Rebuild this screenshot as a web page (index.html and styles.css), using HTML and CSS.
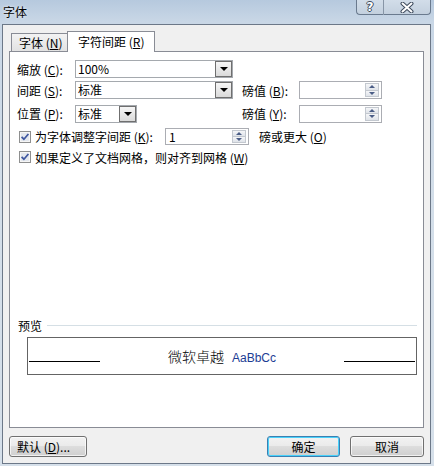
FILE: index.html
```html
<!DOCTYPE html>
<html lang="zh-CN">
<head>
<meta charset="utf-8">
<title>字体</title>
<link rel="stylesheet" href="styles.css">
</head>
<body>
<div class="window">
  <div class="titlebar">
    <span class="title">字体</span>
    <div class="caption">
      <div class="cap-btn help"><span class="qmark">?</span></div>
      <div class="cap-btn close">
        <svg width="14" height="11" viewBox="0 0 14 11">
          <path d="M2.5 1.5 L11.5 9.5 M11.5 1.5 L2.5 9.5" stroke="#3d4a5c" stroke-width="4" stroke-linecap="round" fill="none"/>
          <path d="M2.5 1.5 L11.5 9.5 M11.5 1.5 L2.5 9.5" stroke="#ffffff" stroke-width="2" stroke-linecap="round" fill="none"/>
        </svg>
      </div>
    </div>
  </div>
  <div class="client">
    <div class="tabs">
      <div class="tab inactive">字体 (<u>N</u>)</div>
      <div class="tab active">字符间距 (<u>R</u>)</div>
    </div>
    <div class="panel">
      <div class="row r1">
        <span class="lbl">缩放 (<u>C</u>):</span>
        <div class="combo wide"><span class="val">100%</span><span class="drop"></span></div>
      </div>
      <div class="row r2">
        <span class="lbl">间距 (<u>S</u>):</span>
        <div class="combo wide"><span class="val">标准</span><span class="drop"></span></div>
        <span class="lbl2">磅值 (<u>B</u>):</span>
        <div class="spin wide2"><span class="val"></span><span class="arrows"><span class="up"></span><span class="down"></span></span></div>
      </div>
      <div class="row r3">
        <span class="lbl">位置 (<u>P</u>):</span>
        <div class="combo narrow"><span class="val">标准</span><span class="drop"></span></div>
        <span class="spacer"></span>
        <span class="lbl2">磅值 (<u>Y</u>):</span>
        <div class="spin wide2"><span class="val"></span><span class="arrows"><span class="up"></span><span class="down"></span></span></div>
      </div>
      <div class="row r4">
        <span class="check"><svg width="12" height="12" viewBox="0 0 12 12"><rect x="0.5" y="0.5" width="11" height="11" fill="#f6f6f6" stroke="#8e8f8f"/><rect x="2" y="2" width="8" height="8" fill="#e4e8ee"/><path d="M2.6 5.8 L4.9 8.2 L9.4 3" stroke="#3f57a0" stroke-width="1.7" fill="none"/></svg></span>
        <span class="clabel">为字体调整字间距 (<u>K</u>):</span>
        <div class="spin kern"><span class="val">1</span><span class="arrows"><span class="up"></span><span class="down"></span></span></div>
        <span class="after">磅或更大 (<u>O</u>)</span>
      </div>
      <div class="row r5">
        <span class="check"><svg width="12" height="12" viewBox="0 0 12 12"><rect x="0.5" y="0.5" width="11" height="11" fill="#f6f6f6" stroke="#8e8f8f"/><rect x="2" y="2" width="8" height="8" fill="#e4e8ee"/><path d="M2.6 5.8 L4.9 8.2 L9.4 3" stroke="#3f57a0" stroke-width="1.7" fill="none"/></svg></span>
        <span class="clabel">如果定义了文档网格，则对齐到网格 (<u>W</u>)</span>
      </div>
      <div class="preview-head">
        <span class="ptitle">预览</span>
        <span class="pline"></span>
      </div>
      <div class="preview">
        <span class="base"></span>
        <span class="sample">微软卓越<span class="latin">AaBbCc</span></span>
        <span class="base"></span>
      </div>
    </div>
    <div class="buttons">
      <div class="btn def">默认 (<u>D</u>)...</div>
      <span class="fill"></span>
      <div class="btn ok">确定</div>
      <div class="btn cancel">取消</div>
    </div>
  </div>
</div>
</body>
</html>
```

FILE: styles.css
```css
* { box-sizing: border-box; }
html, body { margin: 0; padding: 0; }
body {
  width: 434px;
  height: 466px;
  overflow: hidden;
  font-family: "Noto Sans CJK SC", "Noto Sans", sans-serif;
  font-size: 12px;
  color: #000;
}
u { text-decoration: underline; }

.window {
  width: 434px;
  height: 466px;
  background: linear-gradient(180deg, #b6c9de 0px, #c9d7e6 22px, #d3dee9 200px, #d6e0ea 466px);
  display: flex;
  flex-direction: column;
}

/* title bar */
.titlebar {
  height: 24px;
  display: flex;
  justify-content: space-between;
  align-items: flex-start;
  padding: 0 3px 0 3px;
}
.title {
  margin-top: 4px;
  line-height: 16px;
  font-size: 12px;
  color: #000;
  text-shadow: 0 0 3px rgba(255,255,255,0.9);
}
.caption { display: flex; }
.cap-btn {
  height: 15px;
  border: 1px solid #6a7a8e;
  border-top: none;
  display: flex;
  align-items: center;
  justify-content: center;
  background: linear-gradient(180deg, #d2dde9, #c3d0de);
}
.help { width: 28px; border-radius: 0 0 0 4px; border-right: 1px solid #8795a6; }
.close { width: 47px; border-left: none; border-radius: 0 0 4px 0; }
.qmark {
  font-family: "DejaVu Sans", sans-serif;
  font-weight: bold;
  font-size: 12px;
  line-height: 13px;
  color: #fff;
  text-shadow: -1px 0 #3d4a5c, 1px 0 #3d4a5c, 0 -1px #3d4a5c, 0 1px #3d4a5c;
}

/* client */
.client {
  margin-left: 2px;
  width: 429px;
  height: 440px;
  border: 1px solid #6c7888;
  background: #f0f0f0;
  display: flex;
  flex-direction: column;
}

.tabs {
  height: 26px;
  display: flex;
  align-items: flex-end;
  padding-left: 8px;
}
.tab {
  border: 1px solid #898c95;
  border-bottom: none;
  white-space: nowrap;
}
.tab.inactive {
  width: 57px;
  height: 18px;
  padding-left: 7px;
  line-height: 18px;
  background: linear-gradient(180deg, #f3f3f3, #e2e2e2);
}
.tab.active {
  width: 88px;
  height: 21px;
  margin-left: -1px;
  margin-bottom: -1px;
  padding-left: 10px;
  line-height: 20px;
  background: #fff;
  position: relative;
  z-index: 1;
}

.panel {
  margin-left: 6px;
  width: 415px;
  height: 377px;
  border: 1px solid #898c95;
  background: #fff;
  padding: 8px 6px 0 7px;
  display: flex;
  flex-direction: column;
}

.row { display: flex; align-items: center; white-space: nowrap; }
.r1 { height: 18px; }
.r2 { height: 18px; margin-top: 3px; }
.r3 { height: 19px; margin-top: 5px; }
.r4 { height: 17px; margin-top: 5px; }
.r5 { height: 14px; margin-top: 5px; }

.lbl { width: 58px; }
.lbl2 { width: 57px; margin-left: 9px; }
.spacer { width: 96px; }

.combo {
  height: 18px;
  border: 1px solid #a5a9ae;
  background: #fff;
  display: flex;
}
.combo.wide { width: 158px; }
.combo.narrow { width: 62px; }
.combo .val { flex: 1; padding-left: 2px; line-height: 16px; }
.combo .drop {
  width: 17px;
  border: 1px solid #6f6f6f;
  background: linear-gradient(180deg, #f6f6f6, #dadada);
  display: flex;
  align-items: center;
  justify-content: center;
}
.combo .drop::after {
  content: "";
  border-left: 4px solid transparent;
  border-right: 4px solid transparent;
  border-top: 4px solid #000;
}

.spin {
  height: 18px;
  border: 1px solid #abadb3;
  background: #fff;
  display: flex;
}
.spin.wide2 { width: 83px; }
.spin.kern { width: 84px; height: 17px; margin-left: 0; }
.spin .val { flex: 1; padding-left: 3px; line-height: 15px; }
.spin .arrows {
  width: 14px;
  margin: 1px 2px 1px 0;
  display: flex;
  flex-direction: column;
  border: 1px solid #c3c8cf;
}
.spin .arrows span {
  flex: 1;
  display: flex;
  align-items: center;
  justify-content: center;
  background: linear-gradient(180deg, #f5f6f8, #dfe3e9);
}
.spin .arrows .up { border-bottom: 1px solid #c3c8cf; }
.spin .up::after {
  content: "";
  border-left: 3px solid transparent;
  border-right: 3px solid transparent;
  border-bottom: 3px solid #4a5d86;
}
.spin .down::after {
  content: "";
  border-left: 3px solid transparent;
  border-right: 3px solid transparent;
  border-top: 3px solid #4a5d86;
}

.check { width: 12px; height: 12px; margin-left: 2px; display: flex; }
.check svg { display: block; }
.clabel { margin-left: 4px; }
.r4 .clabel { width: 130px; }
.after { margin-left: 10px; }

/* preview */
.preview-head {
  margin-top: 154px;
  height: 15px;
  display: flex;
  align-items: center;
}
.ptitle { margin-left: 1px; line-height: 15px; }
.pline { flex: 1; height: 1px; margin-left: 5px; background: #d5dfe5; }

.preview {
  margin-top: 4px;
  margin-left: 10px;
  width: 390px;
  height: 38px;
  border: 1px solid #646464;
  display: flex;
  padding: 0 1px;
}
.base { width: 71px; height: 1px; background: #000; margin-top: 23px; }
.sample {
  flex: 1;
  text-align: center;
  font-size: 14px;
  font-weight: 300;
  line-height: 20px;
  padding-top: 8px;
}
.latin {
  font-family: "Liberation Sans", sans-serif;
  font-size: 12px;
  font-weight: normal;
  color: #1c3c94;
  margin-left: 8px;
}

/* buttons */
.buttons {
  display: flex;
  margin-top: 8px;
  padding: 0 6px;
  height: 21px;
}
.fill { flex: 1; }
.btn {
  height: 21px;
  border: 1px solid #707070;
  border-radius: 3px;
  background: linear-gradient(180deg, #f2f2f2 0%, #ebebeb 45%, #dddddd 50%, #cfcfcf 100%);
  box-shadow: inset 0 0 0 1px rgba(255,255,255,0.7);
  text-align: center;
  line-height: 19px;
  white-space: nowrap;
}
.btn.def { width: 78px; text-align: left; padding-left: 7px; }
.btn.ok {
  width: 73px;
  border-color: #3c7fb1;
  box-shadow: inset 0 0 0 1px #48d1fa;
}
.btn.cancel { width: 74px; margin-left: 10px; }
```
